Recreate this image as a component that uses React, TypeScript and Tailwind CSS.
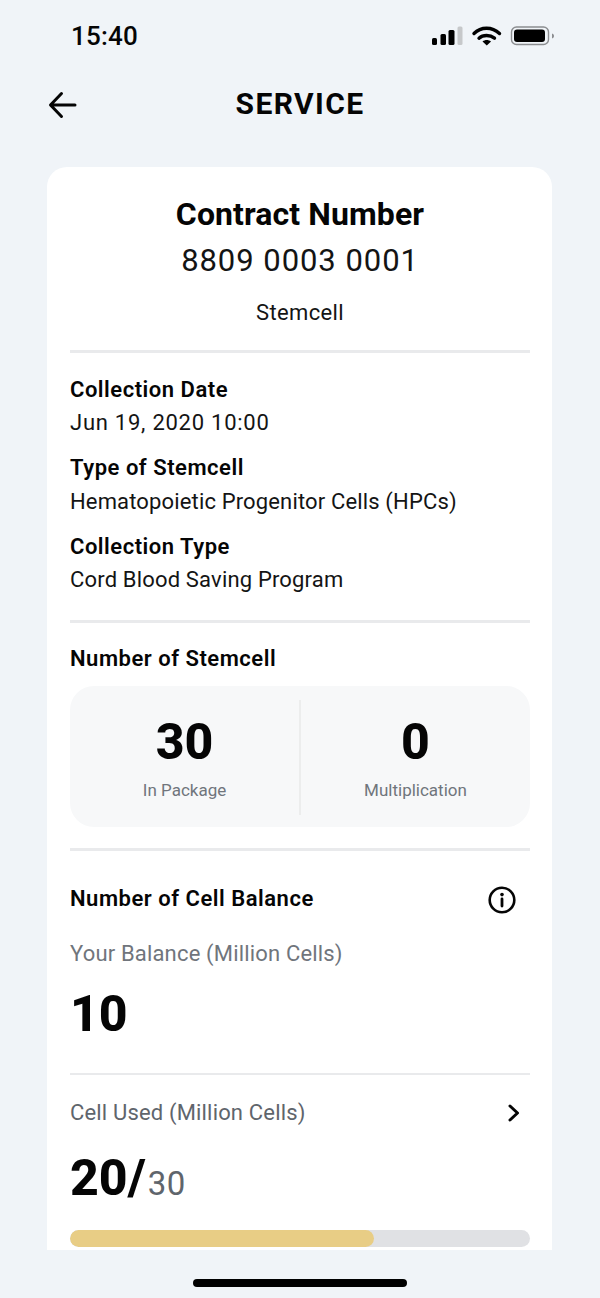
import { ReactNode } from "react";

function Divider({ className }: { className: string }) {
    return <div className={`h-[3px] w-full bg-[#e9eaec] ${className}`} />;
}

function Label({ className, children }: { className: string; children: ReactNode }) {
    return <div className={`h-[30px] text-[22px] leading-[30px] font-semibold tracking-[0.52px] text-[#050505] ${className}`}>{children}</div>;
}

function Value({ className, children }: { className: string; children: ReactNode }) {
    return <div className={`h-[30px] text-[22px] leading-[30px] text-[#141414] ${className}`}>{children}</div>;
}

function StatusIcons() {
    return (
        <svg width="124" height="20" viewBox="0 0 124 20" fill="none">
            <rect x="0" y="12" width="5" height="7" rx="1.5" fill="#000" />
            <rect x="8.5" y="8" width="5.5" height="11" rx="1.5" fill="#000" />
            <rect x="16.5" y="4" width="6" height="15" rx="1.5" fill="#000" />
            <rect x="25.5" y="0.5" width="5" height="18.5" rx="1.5" fill="#c6c8ca" />
            <path d="M42 7.5C49 0.5 60 0.5 67.5 7.5" stroke="#000" strokeWidth="3.4" strokeLinecap="round" />
            <path d="M47 12.2C51 8.6 58 8.6 62.5 12.2" stroke="#000" strokeWidth="3.4" strokeLinecap="round" />
            <path d="M50.5 15.5L54.8 19.5L59 15.5C56.5 13.5 53 13.5 50.5 15.5Z" fill="#000" />
            <rect x="79.5" y="1" width="37" height="17.5" rx="5" stroke="#8b8d90" strokeWidth="1.4" />
            <rect x="82" y="3.5" width="31" height="12.5" rx="3" fill="#000" />
            <path d="M120 7.5C121.5 8 122 9 122 10C122 11 121.5 12 120 12.5Z" fill="#8b8d90" />
        </svg>
    );
}

export default function App() {
    return (
        <div className="flex h-[1298px] w-[600px] flex-col overflow-hidden bg-[#f0f4f8] font-['Roboto',sans-serif]">
            <div className="flex h-[72px] shrink-0 items-center justify-between pr-[44px] pl-[71px]">
                <span className="text-[26px] font-medium tracking-[0.2px] text-[#050505]">15:40</span>
                <StatusIcons />
            </div>

            <div className="relative flex h-[62px] shrink-0 items-center justify-center">
                <svg className="absolute top-[18px] left-[47px]" width="32" height="30" viewBox="0 0 32 30" fill="none">
                    <path d="M28 15H4M14.5 3.5L3.5 15L14.5 26.5" stroke="#050505" strokeWidth="3" strokeLinecap="round" strokeLinejoin="round" />
                </svg>
                <span className="text-[30px] font-bold tracking-[1.4px] text-[#050505]">SERVICE</span>
            </div>

            <div className="mt-[33px] ml-[47px] h-[1083px] w-[505px] shrink-0 overflow-hidden rounded-t-[20px] bg-white pr-[22px] pl-[23px]">
                <div className="mt-[27px] h-[40px] text-center text-[32px] leading-[40px] font-bold tracking-[0.1px] text-[#050505]">Contract Number</div>
                <div className="mt-[7px] h-[40px] text-center text-[31px] leading-[40px] tracking-[0.95px] text-[#141414]">8809 0003 0001</div>
                <Value className="mt-[17px] text-center tracking-[0.35px]">Stemcell</Value>
                <Divider className="mt-[22px]" />

                <Label className="mt-[22px]">Collection Date</Label>
                <Value className="mt-[3px] tracking-[0.75px]">Jun 19, 2020 10:00</Value>
                <Label className="mt-[15px]">Type of Stemcell</Label>
                <Value className="mt-[4px] tracking-[0.15px]">Hematopoietic Progenitor Cells (HPCs)</Value>
                <Label className="mt-[15px]">Collection Type</Label>
                <Value className="mt-[3px] tracking-[0.17px]">Cord Blood Saving Program</Value>
                <Divider className="mt-[25px]" />

                <Label className="mt-[21px]">Number of Stemcell</Label>
                <div className="mt-[12px] flex h-[141px] items-center rounded-[24px] bg-[#f7f8f9] pt-[2px]">
                    <div className="flex flex-1 flex-col items-center">
                        <div className="h-[56px] text-[50px] leading-[56px] font-extrabold text-[#050505]">30</div>
                        <div className="mt-[8px] h-[24px] text-[17px] leading-[24px] text-[#70757c]">In Package</div>
                    </div>
                    <div className="h-[115px] w-[2px] bg-[#eceded]" />
                    <div className="flex flex-1 flex-col items-center">
                        <div className="h-[56px] text-[50px] leading-[56px] font-extrabold text-[#050505]">0</div>
                        <div className="mt-[8px] h-[24px] text-[17px] leading-[24px] text-[#70757c]">Multiplication</div>
                    </div>
                </div>
                <Divider className="mt-[21px]" />

                <div className="mt-[33px] flex h-[30px] items-center justify-between pr-[14px]">
                    <Label className="">Number of Cell Balance</Label>
                    <svg className="mt-[1px]" width="28" height="28" viewBox="0 0 28 28" fill="none">
                        <circle cx="14" cy="14" r="12.3" stroke="#050505" strokeWidth="2.6" />
                        <path d="M14 13V20" stroke="#050505" strokeWidth="2.8" strokeLinecap="round" />
                        <circle cx="14" cy="8.6" r="1.8" fill="#050505" />
                    </svg>
                </div>
                <div className="mt-[25px] h-[30px] text-[22px] leading-[30px] tracking-[0.17px] text-[#70757c]">Your Balance (Million Cells)</div>
                <div className="mt-[17px] h-[56px] text-[50px] leading-[56px] font-extrabold text-[#050505]">10</div>
                <div className="mt-[31px] h-[2px] w-full bg-[#e9eaec]" />

                <div className="mt-[23px] flex h-[30px] items-center justify-between pr-[10px]">
                    <div className="text-[22px] leading-[30px] tracking-[0.17px] text-[#5f656c]">Cell Used (Million Cells)</div>
                    <svg width="12" height="18" viewBox="0 0 12 18" fill="none">
                        <path d="M2 2L9.5 9L2 16" stroke="#050505" strokeWidth="3" strokeLinecap="round" strokeLinejoin="round" />
                    </svg>
                </div>
                <div className="mt-[22px] flex h-[56px] items-baseline">
                    <span className="text-[50px] leading-[56px] font-extrabold text-[#050505]">20/</span>
                    <span className="ml-[2px] text-[33px] leading-[56px] tracking-[0.4px] text-[#5f656c]">30</span>
                </div>
                <div className="mt-[24px] h-[17px] overflow-hidden rounded-full bg-[#e0e1e4]">
                    <div className="h-full w-[66%] rounded-full bg-[#e8cd85]" />
                </div>
            </div>

            <div className="flex flex-1 justify-center pt-[29px]">
                <div className="h-[8px] w-[214px] rounded-full bg-black" />
            </div>
        </div>
    );
}
